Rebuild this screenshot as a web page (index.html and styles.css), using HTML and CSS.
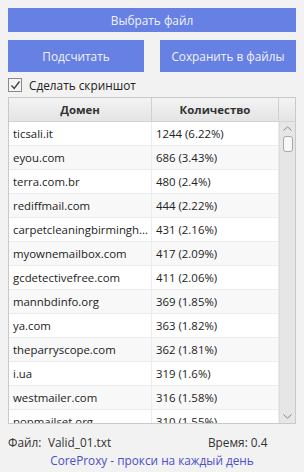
FILE: index.html
```html
<!DOCTYPE html>
<html lang="ru">
<head>
  <meta charset="UTF-8">
  <meta name="viewport" content="width=device-width, initial-scale=1.0">
  <title>Domain stats</title>
  <link rel="stylesheet" href="styles.css">
</head>
<body>
  <div class="app">
    <button class="btn btn-wide">Выбрать файл</button>
    <div class="btn-row">
      <button class="btn">Подсчитать</button>
      <button class="btn">Сохранить в файлы</button>
    </div>
    <label class="check">
      <span class="check-box">
        <svg width="11" height="11" viewBox="0 0 11 11"><path d="M1.5 5.5 L4.2 8.5 L9.5 1.5" fill="none" stroke="#444" stroke-width="1.4"/></svg>
      </span>
      Сделать скриншот
    </label>

    <div class="table">
      <div class="thead">
        <div class="th">Домен</div>
        <div class="th">Количество</div>
        <div class="th"></div>
      </div>
      <div class="tbody">
        <div class="rows">
          <div class="row"><div class="cell">ticsali.it</div><div class="cell">1244 (6.22%)</div></div>
          <div class="row"><div class="cell">eyou.com</div><div class="cell">686 (3.43%)</div></div>
          <div class="row"><div class="cell">terra.com.br</div><div class="cell">480 (2.4%)</div></div>
          <div class="row"><div class="cell">rediffmail.com</div><div class="cell">444 (2.22%)</div></div>
          <div class="row"><div class="cell">carpetcleaningbirmingh...</div><div class="cell">431 (2.16%)</div></div>
          <div class="row"><div class="cell">myownemailbox.com</div><div class="cell">417 (2.09%)</div></div>
          <div class="row"><div class="cell">gcdetectivefree.com</div><div class="cell">411 (2.06%)</div></div>
          <div class="row"><div class="cell">mannbdinfo.org</div><div class="cell">369 (1.85%)</div></div>
          <div class="row"><div class="cell">ya.com</div><div class="cell">363 (1.82%)</div></div>
          <div class="row"><div class="cell">theparryscope.com</div><div class="cell">362 (1.81%)</div></div>
          <div class="row"><div class="cell">i.ua</div><div class="cell">319 (1.6%)</div></div>
          <div class="row"><div class="cell">westmailer.com</div><div class="cell">316 (1.58%)</div></div>
          <div class="row"><div class="cell">popmailset.org</div><div class="cell">310 (1.55%)</div></div>
        </div>
        <div class="scrollbar">
          <svg class="arrow" width="9" height="5" viewBox="0 0 9 5"><path d="M0.5 4.5 L4.5 0.8 L8.5 4.5" fill="none" stroke="#888" stroke-width="1"/></svg>
          <div class="thumb"></div>
          <div class="track"></div>
          <svg class="arrow" width="9" height="5" viewBox="0 0 9 5"><path d="M0.5 0.5 L4.5 4.2 L8.5 0.5" fill="none" stroke="#888" stroke-width="1"/></svg>
        </div>
      </div>
    </div>

    <div class="footer">
      <span class="label">Файл:</span>
      <span class="file">Valid_01.txt</span>
      <span class="time">Время: 0.4</span>
    </div>
    <div class="promo">CoreProxy - прокси на каждый день</div>
  </div>
</body>
</html>
```

FILE: styles.css
```css
body {
  margin: 0;
  background-color: #f2f2f2;
  font-family: "Open Sans", "Noto Sans", sans-serif;
  font-size: 11.4px;
  color: #222;
}
.app {
  padding: 8px;
  display: flex;
  flex-direction: column;
}
.btn {
  background-color: #6780e3;
  color: #f0f2fd;
  border: none;
  font-family: inherit;
  font-size: 11.8px;
  padding: 0;
  cursor: pointer;
}
.btn-wide {
  height: 24px;
  margin-bottom: 8px;
}
.btn-row {
  display: grid;
  grid-template-columns: 1fr 1fr;
  gap: 16px;
  height: 32px;
}
.check {
  display: flex;
  align-items: center;
  gap: 7px;
  height: 24px;
  padding-top: 1px;
  font-size: 11.8px;
}
.check-box {
  width: 12px;
  height: 12px;
  border: 1px solid #8a8a8a;
  background: #f4f4f4;
  display: flex;
  align-items: center;
  justify-content: center;
}
.table {
  border: 1px solid #c9c9c9;
  background: #fff;
  height: 325px;
  overflow: hidden;
  display: flex;
  flex-direction: column;
}
.thead {
  display: grid;
  grid-template-columns: 143px 127px 1fr;
  height: 23px;
  border-bottom: 1px solid #d4d4d4;
  background: linear-gradient(#f3f3f3, #e4e4e4);
}
.th {
  display: flex;
  align-items: center;
  justify-content: center;
  font-weight: bold;
  color: #333;
  border-right: 1px solid #d0d0d0;
}
.th:last-child {
  border-right: none;
}
.tbody {
  display: flex;
  flex: 1;
  min-height: 0;
}
.rows {
  width: 270px;
  overflow: hidden;
}
.row {
  display: grid;
  grid-template-columns: 143px 127px;
  height: 24px;
  border-bottom: 1px solid #ececec;
  box-sizing: border-box;
}
.row:nth-child(even) {
  background: #f8f8f8;
}
.cell {
  display: flex;
  align-items: center;
  padding-left: 4px;
  border-right: 1px solid #ececec;
  white-space: nowrap;
  overflow: hidden;
}
.scrollbar {
  flex: 1;
  background: #e6e6e6;
  border-left: 1px solid #dcdcdc;
  display: flex;
  flex-direction: column;
  align-items: center;
  padding: 4px 0 4px;
}
.arrow {
  flex: none;
}
.thumb {
  width: 8px;
  height: 14px;
  margin-top: 5px;
  background: #f7f7f7;
  border: 1px solid #a8a8a8;
  border-radius: 3px;
}
.track {
  flex: 1;
}
.footer {
  display: flex;
  align-items: center;
  height: 20px;
  padding-top: 8px;
  color: #333;
  font-size: 11.8px;
}
.label {
  width: 40px;
}
.file {
  width: 160px;
}
.promo {
  text-align: center;
  color: #4b50c8;
  height: 18px;
  font-size: 11.8px;
}
```
